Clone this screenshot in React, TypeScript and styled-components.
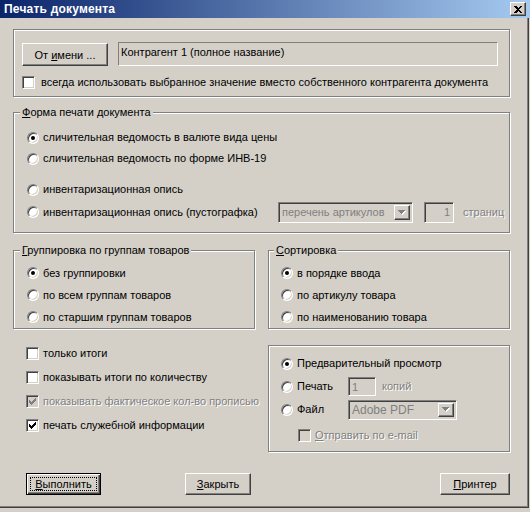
import styled, { createGlobalStyle } from 'styled-components';

const GlobalStyle = createGlobalStyle`
  html, body {
    margin: 0;
    padding: 0;
    background: #d4d0c8;
  }
  body {
    font-family: "Liberation Sans", Arial, sans-serif;
    font-size: 11px;
    color: #000;
  }
`;

const Window = styled.div`
  width: 530px;
  height: 512px;
  background: #d4d0c8;
  overflow: hidden;
`;

const TitleBar = styled.div`
  height: 18px;
  display: flex;
  align-items: center;
  justify-content: space-between;
  padding: 0 4px 0 4px;
  background: linear-gradient(to right, #0a246a, #a6caf0);
`;

const Title = styled.span`
  color: #fff;
  font-weight: bold;
  font-size: 12px;
  letter-spacing: 0.2px;
`;

const raised = `
  border: 1px solid;
  border-color: #fff #404040 #404040 #fff;
  box-shadow: inset -1px -1px 0 #808080, inset 1px 1px 0 #d4d0c8;
`;

const sunken = `
  border: 1px solid;
  border-color: #808080 #fff #fff #808080;
  box-shadow: inset 1px 1px 0 #404040, inset -1px -1px 0 #d4d0c8;
`;

const etched = `
  border: 1px solid #808080;
  box-shadow: 1px 1px 0 #fff, inset 1px 1px 0 #fff;
`;

const CloseButton = styled.span`
  box-sizing: border-box;
  width: 16px;
  height: 14px;
  display: flex;
  align-items: center;
  justify-content: center;
  background: #d4d0c8;
  ${raised}
`;

const Body = styled.div`
  box-sizing: border-box;
  width: 529px;
  height: 490px;
  padding: 11px 0 0 13px;
  border-right: 1px solid #404040;
  border-bottom: 1px solid #404040;
  box-shadow: inset -1px -1px 0 #808080;
  display: flex;
  flex-direction: column;
`;

const Panel = styled.div<{ $pad: string; $mt?: number; $w?: number }>`
  box-sizing: border-box;
  ${(p) => (p.$w ? `width: ${p.$w}px;` : '')}
  padding: ${(p) => p.$pad};
  margin-top: ${(p) => p.$mt ?? 0}px;
  ${etched}
`;

const Group = styled.fieldset<{ $pad: string; $mt?: number; $w?: number }>`
  margin: ${(p) => p.$mt ?? 0}px 0 0 0;
  min-width: 0;
  box-sizing: border-box;
  ${(p) => (p.$w ? `width: ${p.$w}px;` : '')}
  padding: ${(p) => p.$pad};
  ${etched}
`;

const Legend = styled.legend`
  padding: 0 2px;
  margin-left: -7px;
  line-height: 13px;
  background: #d4d0c8;
`;

const Row = styled.div<{ $h: number; $gap?: number; $mt?: number; $indent?: number }>`
  display: flex;
  align-items: center;
  height: ${(p) => p.$h}px;
  gap: ${(p) => p.$gap ?? 4}px;
  margin-top: ${(p) => p.$mt ?? 0}px;
  padding-left: ${(p) => p.$indent ?? 0}px;
  white-space: nowrap;
`;

const SenderRow = styled.div`
  display: flex;
  align-items: flex-end;
  gap: 10px;
  height: 24px;
`;

const Label = styled.span<{ $w?: number; $ml?: number; $disabled?: boolean }>`
  ${(p) => (p.$w ? `width: ${p.$w}px; flex: none;` : '')}
  margin-left: ${(p) => p.$ml ?? 0}px;
  color: ${(p) => (p.$disabled ? '#808080' : '#000')};
  ${(p) => (p.$disabled ? 'text-shadow: 1px 1px 0 #fff;' : '')}
  line-height: 13px;
`;

const RadioDot = styled.span<{ $on?: boolean }>`
  position: relative;
  flex: none;
  box-sizing: border-box;
  width: 12px;
  height: 12px;
  border-radius: 50%;
  border: 1px solid;
  border-color: #808080 #fff #fff #808080;
  background: #fff;
  box-shadow: inset 1px 1px 0 #404040, inset -1px -1px 0 #d4d0c8;

  &::after {
    content: '';
    display: ${(p) => (p.$on ? 'block' : 'none')};
    position: absolute;
    left: 3px;
    top: 3px;
    width: 4px;
    height: 4px;
    border-radius: 50%;
    background: #000;
  }
`;

const CheckBox = styled.span<{ $disabled?: boolean }>`
  flex: none;
  box-sizing: border-box;
  width: 13px;
  height: 13px;
  display: flex;
  align-items: center;
  justify-content: center;
  background: ${(p) => (p.$disabled ? '#d4d0c8' : '#fff')};
  ${sunken}
`;

const ReadField = styled.div`
  box-sizing: border-box;
  width: 380px;
  height: 24px;
  padding: 2px 2px;
  line-height: 14px;
  border: 1px solid;
  border-color: #808080 #fff #fff #808080;
  background: #d4d0c8;
`;

const SpinField = styled.div<{ $w: number; $h: number; $ml?: number; $align?: string }>`
  box-sizing: border-box;
  width: ${(p) => p.$w}px;
  height: ${(p) => p.$h}px;
  margin-left: ${(p) => p.$ml ?? 0}px;
  padding: 0 3px;
  display: flex;
  align-items: center;
  justify-content: ${(p) => p.$align ?? 'flex-start'};
  color: #808080;
  background: #d4d0c8;
  ${sunken}
`;

const Combo = styled.div<{ $w: number; $h: number }>`
  box-sizing: border-box;
  width: ${(p) => p.$w}px;
  height: ${(p) => p.$h}px;
  padding: 2px 2px 2px 3px;
  display: flex;
  align-items: center;
  justify-content: space-between;
  color: #808080;
  background: #d4d0c8;
  ${sunken}
`;

const ComboText = styled.span<{ $size?: number }>`
  font-size: ${(p) => p.$size ?? 11}px;
`;

const DropButton = styled.span`
  box-sizing: border-box;
  width: 16px;
  height: 100%;
  display: flex;
  align-items: center;
  justify-content: center;
  background: #d4d0c8;
  ${raised}
`;

const Button = styled.button<{ $w: number; $h: number; $default?: boolean }>`
  box-sizing: border-box;
  width: ${(p) => p.$w}px;
  height: ${(p) => p.$h}px;
  padding: 3px;
  margin: 0;
  font: inherit;
  color: #000;
  background: #d4d0c8;
  display: flex;
  align-items: stretch;
  justify-content: center;
  flex: none;
  ${(p) =>
    p.$default
      ? `
    border: 1px solid #000;
    box-shadow: inset 1px 1px 0 #fff, inset -1px -1px 0 #404040, inset -2px -2px 0 #808080;
  `
      : raised}
`;

const ButtonFace = styled.span<{ $focus?: boolean }>`
  flex: 1;
  display: flex;
  align-items: center;
  justify-content: center;
  border: 1px dotted ${(p) => (p.$focus ? '#000' : 'transparent')};
`;

const Columns = styled.div<{ $mt: number }>`
  display: grid;
  grid-template-columns: 242px 242px;
  column-gap: 13px;
  align-items: start;
  margin-top: ${(p) => p.$mt}px;
`;

const CheckList = styled.div`
  display: flex;
  flex-direction: column;
  padding-left: 13px;
`;

const Footer = styled.div`
  display: flex;
  width: 497px;
  margin-top: 21px;
  padding-left: 13px;
  box-sizing: border-box;
`;

const Spacer = styled.span<{ $w?: number }>`
  ${(p) => (p.$w ? `width: ${p.$w}px;` : 'flex: 1;')}
`;

const CloseGlyph = () => (
  <svg width="8" height="7" viewBox="0 0 8 7" shapeRendering="crispEdges">
    <path d="M0 0h2l2 2 2-2h2L5 3.5 8 7H6L4 5 2 7H0l3-3.5z" fill="#000" />
  </svg>
);

const CheckMark = ({ color }: { color: string }) => (
  <svg width="7" height="7" viewBox="0 0 7 7" shapeRendering="crispEdges">
    <path
      d="M0 2h1v3H0zM1 3h1v3H1zM2 4h1v3H2zM3 3h1v3H3zM4 2h1v3H4zM5 1h1v3H5zM6 0h1v3H6z"
      fill={color}
    />
  </svg>
);

const DownArrow = () => (
  <svg width="8" height="5" viewBox="0 0 8 5" shapeRendering="crispEdges">
    <path d="M1 1h7L4.5 5z" fill="#fff" />
    <path d="M0 0h7L3.5 4z" fill="#808080" />
  </svg>
);

const Radio = ({ on, label }: { on?: boolean; label: string }) => (
  <>
    <RadioDot $on={on} />
    <Label>{label}</Label>
  </>
);

export default function App() {
  return (
    <>
      <GlobalStyle />
      <Window>
        <TitleBar>
          <Title>Печать документа</Title>
          <CloseButton>
            <CloseGlyph />
          </CloseButton>
        </TitleBar>
        <Body>
          <Panel $pad="12px 0 6px 8px" $w={497}>
            <SenderRow>
              <Button $w={86} $h={23}>
                <ButtonFace>
                  От&nbsp;<u>и</u>мени ...
                </ButtonFace>
              </Button>
              <ReadField>Контрагент 1 (полное название)</ReadField>
            </SenderRow>
            <Row $h={15} $mt={9} $gap={6}>
              <CheckBox />
              <Label>всегда использовать выбранное значение вместо собственного контрагента документа</Label>
            </Row>
          </Panel>

          <Group $pad="8px 0 9px 13px" $w={497} $mt={9}>
            <Legend>
              <u>Ф</u>орма печати документа
            </Legend>
            <Row $h={21}>
              <Radio on label="сличительная ведомость в валюте вида цены" />
            </Row>
            <Row $h={21}>
              <Radio label="сличительная ведомость по форме ИНВ-19" />
            </Row>
            <Row $h={21} $mt={10}>
              <Radio label="инвентаризационная опись" />
            </Row>
            <Row $h={22} $mt={1}>
              <RadioDot />
              <Label $w={231}>инвентаризационная опись (пустографка)</Label>
              <Combo $w={135} $h={21}>
                <ComboText>перечень артикулов</ComboText>
                <DropButton>
                  <DownArrow />
                </DropButton>
              </Combo>
              <SpinField $w={30} $h={21} $ml={7} $align="flex-end">
                1
              </SpinField>
              <Label $disabled $ml={5}>
                страниц
              </Label>
            </Row>
          </Group>

          <Columns $mt={11}>
            <Group $pad="5px 0 0 13px">
              <Legend>
                <u>Г</u>руппировка по группам товаров
              </Legend>
              <Row $h={22}>
                <Radio on label="без группировки" />
              </Row>
              <Row $h={22}>
                <Radio label="по всем группам товаров" />
              </Row>
              <Row $h={22}>
                <Radio label="по старшим группам товаров" />
              </Row>
            </Group>
            <Group $pad="5px 0 0 12px">
              <Legend>
                <u>С</u>ортировка
              </Legend>
              <Row $h={22}>
                <Radio on label="в порядке ввода" />
              </Row>
              <Row $h={22}>
                <Radio label="по артикулу товара" />
              </Row>
              <Row $h={22}>
                <Radio label="по наименованию товара" />
              </Row>
            </Group>
          </Columns>

          <Columns $mt={12}>
            <CheckList>
              <Row $h={24}>
                <CheckBox />
                <Label>только итоги</Label>
              </Row>
              <Row $h={24}>
                <CheckBox />
                <Label>показывать итоги по количеству</Label>
              </Row>
              <Row $h={24}>
                <CheckBox $disabled>
                  <CheckMark color="#808080" />
                </CheckBox>
                <Label $disabled>показывать фактическое кол-во прописью</Label>
              </Row>
              <Row $h={24}>
                <CheckBox>
                  <CheckMark color="#000" />
                </CheckBox>
                <Label>печать служебной информации</Label>
              </Row>
            </CheckList>

            <Panel $pad="6px 0 4px 12px" $mt={4}>
              <Row $h={23}>
                <Radio on label="Предварительный просмотр" />
              </Row>
              <Row $h={23}>
                <RadioDot />
                <Label $w={47}>Печать</Label>
                <SpinField $w={28} $h={19}>
                  1
                </SpinField>
                <Label $disabled $ml={2}>
                  копий
                </Label>
              </Row>
              <Row $h={23}>
                <RadioDot />
                <Label $w={47}>Файл</Label>
                <Combo $w={109} $h={20}>
                  <ComboText $size={12}>Adobe PDF</ComboText>
                  <DropButton>
                    <DownArrow />
                  </DropButton>
                </Combo>
              </Row>
              <Row $h={23} $mt={3} $indent={17}>
                <CheckBox $disabled />
                <Label $disabled>
                  <u>О</u>тправить по e-mail
                </Label>
              </Row>
            </Panel>
          </Columns>

          <Footer>
            <Button $w={75} $h={22} $default>
              <ButtonFace $focus>
                <span>
                  <u>В</u>ыполнить
                </span>
              </ButtonFace>
            </Button>
            <Spacer $w={84} />
            <Button $w={66} $h={22}>
              <ButtonFace>
                <span>
                  <u>З</u>акрыть
                </span>
              </ButtonFace>
            </Button>
            <Spacer />
            <Button $w={70} $h={22}>
              <ButtonFace>
                <span>
                  <u>П</u>ринтер
                </span>
              </ButtonFace>
            </Button>
          </Footer>
        </Body>
      </Window>
    </>
  );
}
